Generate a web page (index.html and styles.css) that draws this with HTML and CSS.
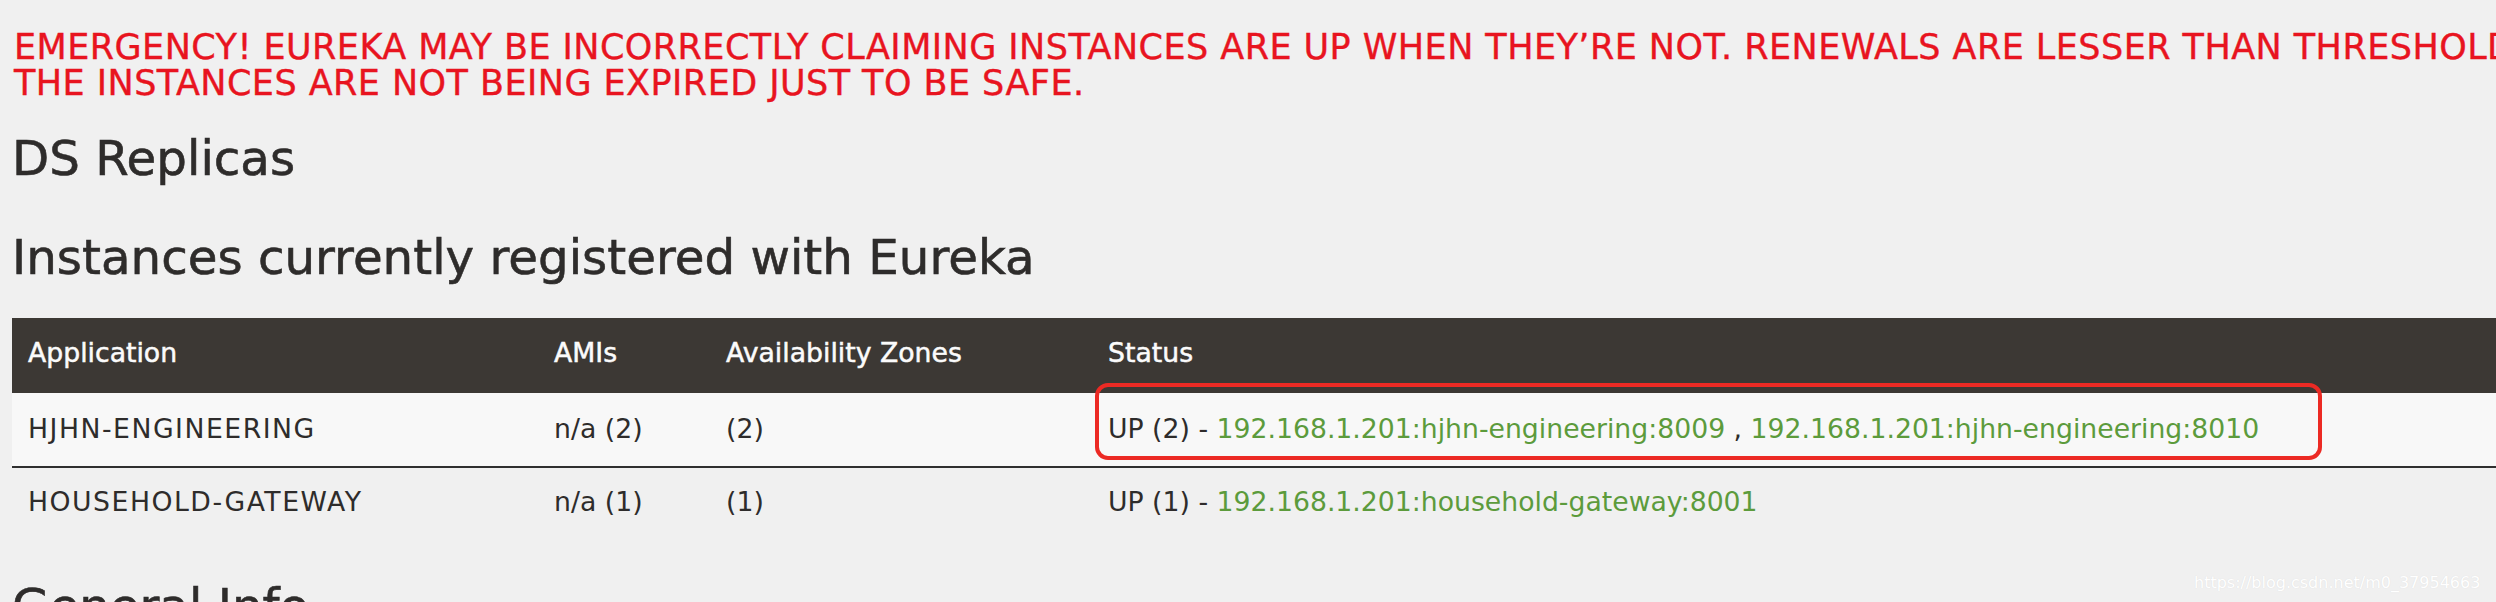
FILE: index.html
```html
<!DOCTYPE html>
<html lang="en">
<head>
<meta charset="utf-8">
<title>Eureka</title>
<link rel="stylesheet" href="styles.css">
</head>
<body>
<div class="page">
  <h4 class="emergency">EMERGENCY! EUREKA MAY BE INCORRECTLY CLAIMING INSTANCES ARE UP WHEN THEY’RE NOT. RENEWALS ARE LESSER THAN THRESHOLD AND HENCE<br>THE INSTANCES ARE NOT BEING EXPIRED JUST TO BE SAFE.</h4>
  <h1 class="title-replicas">DS Replicas</h1>
  <h2 class="title-section">Instances currently registered with Eureka</h2>
  <table class="instances">
    <colgroup>
      <col class="col-app">
      <col class="col-ami">
      <col class="col-zone">
      <col class="col-status">
    </colgroup>
    <thead>
      <tr>
        <th>Application</th>
        <th>AMIs</th>
        <th>Availability Zones</th>
        <th>Status</th>
      </tr>
    </thead>
    <tbody>
      <tr class="row-odd">
        <td><span class="app-name">HJHN-ENGINEERING</span></td>
        <td>n/a (2)</td>
        <td>(2)</td>
        <td class="status-cell">UP (2) - <a class="inst" href="#">192.168.1.201:hjhn-engineering:8009</a> , <a class="inst" href="#">192.168.1.201:hjhn-engineering:8010</a><span class="highlight-box"></span></td>
      </tr>
      <tr class="row-even">
        <td><span class="app-name">HOUSEHOLD-GATEWAY</span></td>
        <td>n/a (1)</td>
        <td>(1)</td>
        <td>UP (1) - <a class="inst" href="#">192.168.1.201:household-gateway:8001</a></td>
      </tr>
    </tbody>
  </table>
  <h2 class="title-section title-general">General Info</h2>
</div>
<div class="watermark">https://blog.csdn.net/m0_37954663</div>
</body>
</html>
```

FILE: styles.css
```css
html, body {
  margin: 0;
  padding: 0;
  background: #f0f0f0;
  overflow: hidden;
}

body {
  font-family: "DejaVu Sans", "Liberation Sans", sans-serif;
  color: #2e2c2b;
  width: 2496px;
  height: 602px;
  position: relative;
}

.page {
  padding: 29px 0 0 12px;
}

.emergency {
  margin: 0;
  font-size: 35px;
  line-height: 36px;
  font-weight: normal;
  letter-spacing: 0.45px;
  color: #e8141f;
  -webkit-text-stroke: 0.4px #e8141f;
  white-space: nowrap;
  padding-left: 2px;
}

.title-replicas {
  margin: 32px 0 0 0;
  font-size: 48.3px;
  line-height: 50px;
  font-weight: normal;
  color: #2e2c2b;
  -webkit-text-stroke: 0.6px #2e2c2b;
}

.title-section {
  margin: 48px 0 0 0;
  font-size: 48.3px;
  line-height: 52px;
  font-weight: normal;
  color: #2e2c2b;
  -webkit-text-stroke: 0.6px #2e2c2b;
  white-space: nowrap;
}

.title-general {
  margin-top: 39px;
}

.instances {
  margin-top: 35px;
  width: 2484px;
  border-collapse: collapse;
  table-layout: fixed;
  font-size: 26.7px;
  line-height: 38px;
}

.col-app { width: 526px; }
.col-ami { width: 172px; }
.col-zone { width: 382px; }

.instances th {
  background: #3c3834;
  color: #fbfbfb;
  font-weight: normal;
  -webkit-text-stroke: 0.5px #fbfbfb;
  text-align: left;
  padding: 16px 16px 21px 16px;
  white-space: nowrap;
}

.instances td {
  padding: 17px 16px 18px 16px;
  white-space: nowrap;
  color: #2e2c2b;
}

.app-name {
  letter-spacing: 1.5px;
}

.row-odd td {
  background: #f8f8f8;
  border-bottom: 2px solid #2f2f2f;
}

.row-even td {
  background: #f0f0f0;
  padding-top: 15px;
  padding-bottom: 20px;
}

.inst {
  color: #5c9b3c;
  text-decoration: none;
}

.status-cell {
  position: relative;
}

.highlight-box {
  position: absolute;
  left: 3px;
  top: -10px;
  width: 1227px;
  height: 77px;
  box-sizing: border-box;
  border: 4px solid #ec2a24;
  border-radius: 13px;
  pointer-events: none;
}

.watermark {
  position: absolute;
  left: 2194px;
  top: 573px;
  font-family: "DejaVu Sans", sans-serif;
  font-size: 16px;
  color: #ffffff;
  text-shadow: 0 0 1px #d8d8d8;
  white-space: nowrap;
}
```
